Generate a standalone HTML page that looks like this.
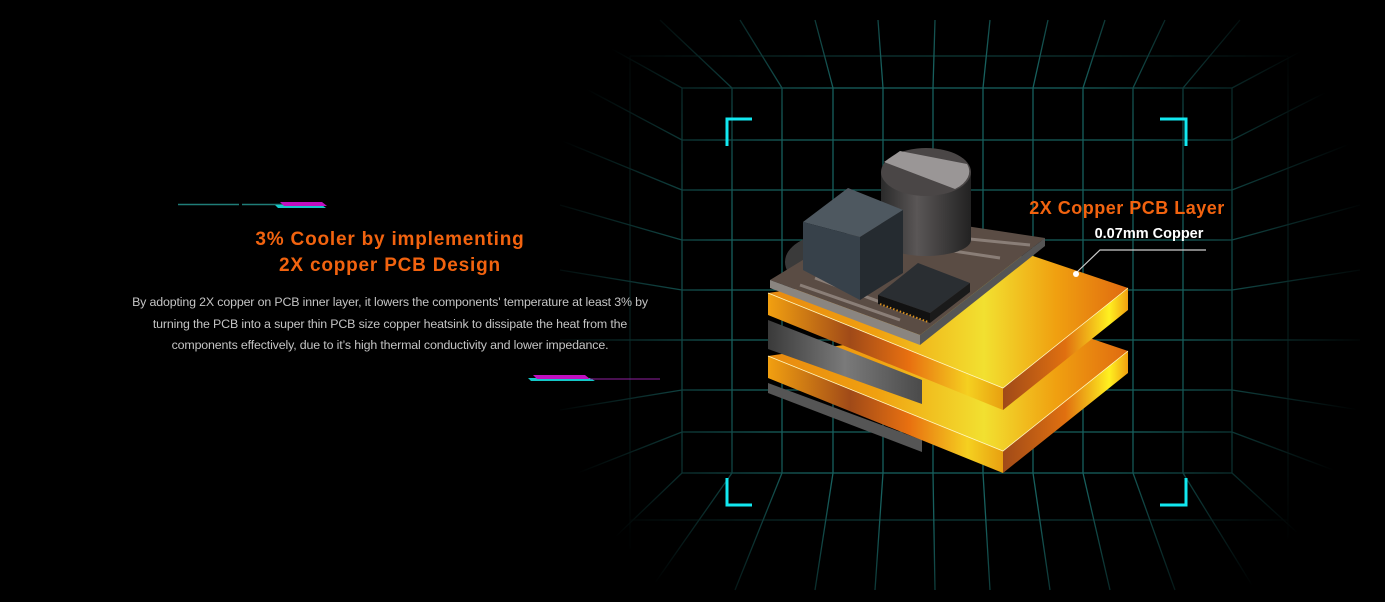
<!DOCTYPE html>
<html><head><meta charset="utf-8"><style>
html,body{margin:0;padding:0;background:#000;width:1385px;height:602px;overflow:hidden}
body{position:relative;font-family:"Liberation Sans",sans-serif}
.h{position:absolute;left:190px;width:400px;text-align:center;color:#f2630f;font-size:19px;letter-spacing:0.8px;font-weight:bold;top:227px;line-height:26px}
.p{position:absolute;left:100px;width:580px;text-align:center;color:#c4c4c4;font-family:"Liberation Sans",sans-serif;font-size:12.4px;letter-spacing:-0.15px;line-height:21.5px;top:292px}
svg{position:absolute;left:0;top:0}
</style></head><body>
<svg width="1385" height="602" viewBox="0 0 1385 602">
<defs>
<radialGradient id="fade" cx="955" cy="290" r="420" gradientUnits="userSpaceOnUse">
<stop offset="0.55" stop-color="#fff"/><stop offset="1" stop-color="#000"/></radialGradient>
<mask id="m"><rect width="1385" height="602" fill="url(#fade)"/></mask>
<linearGradient id="cu" x1="768" y1="0" x2="1128" y2="0" gradientUnits="userSpaceOnUse">
<stop offset="0" stop-color="#e88a10"/><stop offset="0.3" stop-color="#f0a010"/><stop offset="0.6" stop-color="#f2e030"/><stop offset="0.8" stop-color="#f0a010"/><stop offset="1" stop-color="#e06a10"/></linearGradient>
<linearGradient id="cuL" x1="768" y1="0" x2="1003" y2="0" gradientUnits="userSpaceOnUse">
<stop offset="0" stop-color="#f2a010"/><stop offset="0.35" stop-color="#a04a18"/><stop offset="0.6" stop-color="#e87010"/><stop offset="0.85" stop-color="#f5d020"/><stop offset="1" stop-color="#e8a010"/></linearGradient>
<linearGradient id="cuR" x1="1003" y1="0" x2="1128" y2="0" gradientUnits="userSpaceOnUse">
<stop offset="0" stop-color="#a04a18"/><stop offset="0.5" stop-color="#e07010"/><stop offset="0.85" stop-color="#fff020"/><stop offset="1" stop-color="#f0a010"/></linearGradient>
<linearGradient id="gr" x1="0" y1="0" x2="1" y2="0"><stop offset="0" stop-color="#3a3a3a"/><stop offset="0.5" stop-color="#7a7a7a"/><stop offset="1" stop-color="#4a4a4a"/></linearGradient>
<linearGradient id="cap" x1="0" y1="0" x2="1" y2="0"><stop offset="0" stop-color="#2a2a2a"/><stop offset="0.4" stop-color="#5a5656"/><stop offset="1" stop-color="#222"/></linearGradient>
</defs>
<g mask="url(#m)" stroke="#17605e" stroke-width="1.3" fill="none">
<rect x="682" y="88" width="550" height="385"/>
<path d="M732 88V473M782 88V473M833 88V473M883 88V473M933 88V473M983 88V473M1033 88V473M1083 88V473M1133 88V473M1183 88V473"/>
<path d="M682 140H1232M682 190H1232M682 240H1232M682 290H1232M682 340H1232M682 390H1232M682 432H1232"/>
<path d="M682 88L560 20M1232 88L1360 20M682 473L560 590M1232 473L1360 590"/>
<path d="M732 88L660 20M782 88L740 20M833 88L815 20M883 88L878 20M933 88L935 20M983 88L990 20M1033 88L1048 20M1083 88L1105 20M1133 88L1165 20M1183 88L1240 20"/>
<path d="M732 473L650 590M782 473L735 590M833 473L815 590M883 473L875 590M933 473L935 590M983 473L990 590M1033 473L1050 590M1083 473L1110 590M1133 473L1175 590M1183 473L1255 590"/>
<path d="M682 140L560 75M682 190L560 140M682 240L560 205M682 290L560 270M682 340L560 340M682 390L560 410M682 432L560 480"/>
<path d="M1232 140L1360 75M1232 190L1360 140M1232 240L1360 205M1232 290L1360 270M1232 340L1360 340M1232 390L1360 410M1232 432L1360 480"/>
<path d="M630 56V550M1288 56V550M630 56H1288M630 520H1288" opacity="0.6"/>
</g>
<g stroke="#12e8f0" stroke-width="3" fill="none">
<path d="M727 146V119H752M1160 119H1186V146M727 478V505H752M1160 505H1186V478"/>
</g>
<!-- deco -->
<path d="M178 204.5H239M242 204.5H284" stroke="#1f7d78" stroke-width="1.6"/>
<path d="M275 205H322L326 208H278Z" fill="#14c8c8"/>
<path d="M280 202H322L327 206H284Z" fill="#c010c0"/>
<path d="M528 378H590L595 381H531Z" fill="#14c8c8"/>
<path d="M533 375H585L590 379H537Z" fill="#c010c0"/>
<path d="M590 379H660" stroke="#9020a0" stroke-width="1"/>
<!-- bottom thin gray -->
<path d="M768 383L922 440V452L768 393Z" fill="#555"/>
<!-- lower plate -->
<path d="M768 356L1030 318L1128 351L1003 451Z" fill="url(#cu)"/>
<path d="M768 356L1003 451V473L768 378Z" fill="url(#cuL)"/>
<path d="M1003 451L1128 351V373L1003 473Z" fill="url(#cuR)"/>
<path d="M768 356L1003 451L1128 351" stroke="#fff8c0" stroke-width="0.8" fill="none"/>
<!-- gray slab -->
<path d="M768 320L922 380V404L768 349Z" fill="url(#gr)"/>
<!-- upper plate -->
<path d="M768 293L1030 255L1128 288L1003 388Z" fill="url(#cu)"/>
<path d="M768 293L1003 388V410L768 315Z" fill="url(#cuL)"/>
<path d="M1003 388L1128 288V310L1003 410Z" fill="url(#cuR)"/>
<path d="M768 293L1003 388L1128 288" stroke="#fff8c0" stroke-width="0.8" fill="none"/>
<!-- PCB -->
<ellipse cx="830" cy="262" rx="45" ry="28" fill="#3a3a3a"/>
<path d="M770 280L880 213L1045 238L920 335Z" fill="#5a4c44"/>
<path d="M770 280L920 335V345L770 288Z" fill="#8a8580"/>
<path d="M920 335L1045 238V246L920 345Z" fill="#555"/>
<path d="M800 285L900 320M815 278L910 313M880 240L1000 258M900 232L1030 245" stroke="#aaa09a" stroke-width="3" opacity="0.6"/>
<!-- capacitor -->
<path d="M881 172V240A45 16 0 0 0 971 240V172Z" fill="url(#cap)"/>
<ellipse cx="926" cy="172" rx="45" ry="24" fill="#4a4646"/>
<path d="M884 162L955 189A45 24 0 0 0 967 164L900 151Z" fill="#9a9696"/>
<!-- cube -->
<path d="M803 222L848 188L903 210L860 237Z" fill="#4e5860"/>
<path d="M803 222L860 237V300L803 270Z" fill="#37414a"/>
<path d="M860 237L903 210V273L860 300Z" fill="#252b30"/>
<!-- chip -->
<path d="M878 295L918 263L970 283L930 313Z" fill="#2a2e32"/>
<path d="M878 295L930 313V323L878 304Z" fill="#111"/>
<path d="M930 313L970 283V292L930 323Z" fill="#1a1a1a"/>
<path d="M880 304L928 322" stroke="#d89020" stroke-width="2" stroke-dasharray="1.5 2"/>
<!-- callout -->
<path d="M1076 273L1100 250H1206" stroke="#ccc" stroke-width="1.2" fill="none"/>
<circle cx="1076" cy="274" r="3" fill="#fff"/>
<text x="1127" y="214" text-anchor="middle" fill="#f2630f" font-family="Liberation Sans, sans-serif" font-size="18" font-weight="bold" letter-spacing="0.5">2X Copper PCB Layer</text>
<text x="1149" y="238" text-anchor="middle" fill="#fff" font-family="Liberation Sans, sans-serif" font-size="14.5" font-weight="bold">0.07mm Copper</text>
</svg>
<div class="h">3% Cooler by implementing<br>2X copper PCB Design</div>
<div class="p">By adopting 2X copper on PCB inner layer, it lowers the components' temperature at least 3% by<br>turning the PCB into a super thin PCB size copper heatsink to dissipate the heat from the<br>components effectively, due to it’s high thermal conductivity and lower impedance.</div>
</body></html>
